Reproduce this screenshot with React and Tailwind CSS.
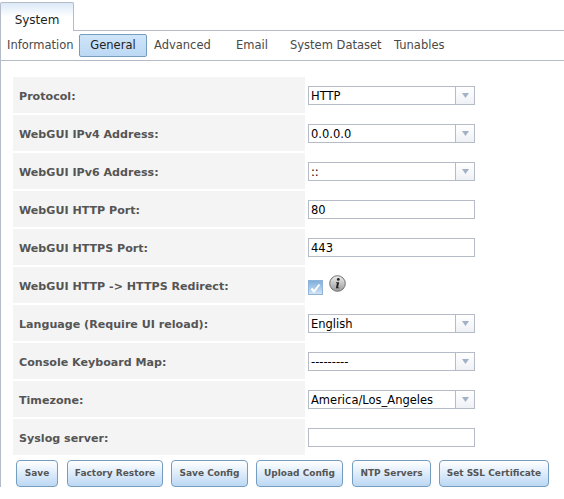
import React from 'react';

const font = "font-['DejaVu_Sans',sans-serif]";

const rows = [
  { label: 'Protocol:', type: 'select', value: 'HTTP' },
  { label: 'WebGUI IPv4 Address:', type: 'select', value: '0.0.0.0' },
  { label: 'WebGUI IPv6 Address:', type: 'select', value: '::' },
  { label: 'WebGUI HTTP Port:', type: 'text', value: '80' },
  { label: 'WebGUI HTTPS Port:', type: 'text', value: '443' },
  { label: 'WebGUI HTTP -> HTTPS Redirect:', type: 'check' },
  { label: 'Language (Require UI reload):', type: 'select', value: 'English' },
  { label: 'Console Keyboard Map:', type: 'select', value: '---------' },
  { label: 'Timezone:', type: 'select', value: 'America/Los_Angeles' },
  { label: 'Syslog server:', type: 'text', value: '' },
];

const subTabs = [
  { label: 'Information', w: 'w-[72px]' },
  { label: 'General', w: 'w-[68px]', active: true },
  { label: 'Advanced', w: 'w-[89px] pl-[7px]' },
  { label: 'Email', w: 'w-[54px]' },
  { label: 'System Dataset', w: 'w-[104px]' },
  { label: 'Tunables', w: 'w-[60px]' },
];

const buttons = [
  { label: 'Save', w: 'w-[42px]' },
  { label: 'Factory Restore', w: 'w-[96px] ml-[9px]' },
  { label: 'Save Config', w: 'w-[77px] ml-[8px]' },
  { label: 'Upload Config', w: 'w-[87px] ml-[8px]' },
  { label: 'NTP Servers', w: 'w-[79px] ml-[9px]' },
  { label: 'Set SSL Certificate', w: 'w-[110px] ml-[8px]' },
];

const Select = ({ value }) => (
  <div className="flex h-[19px] w-[167px] border border-[#b5bcc7] bg-white">
    <span className="flex-1 pl-[2px] text-[11.5px] leading-[19px] text-black">{value}</span>
    <span className="flex w-[19px] items-center justify-center border-l border-[#b5bcc7] bg-gradient-to-b from-white to-[#eef1f5]">
      <svg width="7" height="5" viewBox="0 0 7 5">
        <path d="M0 0h7L3.5 5z" fill="#a3b1c6" />
      </svg>
    </span>
  </div>
);

const TextInput = ({ value }) => (
  <div className="h-[19px] w-[167px] border border-[#b5bcc7] bg-white pl-[2px] text-[11.5px] leading-[19px] text-black">
    {value}
  </div>
);

const Check = () => (
  <div className="flex h-[36px] items-start gap-[6px]">
    <span className="mt-[13px] flex h-[15px] w-[15px] items-center justify-center border border-[#8fb4d8] bg-gradient-to-b from-[#7fb0dc] to-[#cfe3f5]">
      <svg width="11" height="10" viewBox="0 0 11 10">
        <path d="M1.5 5.5 4 8.5 9.5 1.5" fill="none" stroke="#fff" strokeWidth="2" />
      </svg>
    </span>
    <svg className="mt-[8px]" width="17" height="17" viewBox="0 0 17 17">
      <defs>
        <linearGradient id="info" x1="0" y1="0" x2="0" y2="1">
          <stop offset="0" stopColor="#eeeeee" />
          <stop offset="1" stopColor="#9a9a9a" />
        </linearGradient>
      </defs>
      <circle cx="8.5" cy="8.5" r="7.8" fill="url(#info)" stroke="#6f6f6f" />
      <circle cx="9.3" cy="4.4" r="1.4" fill="#222" />
      <path d="M7 7.2h3.2L9 12.4h1.2v.9H6.9l1-5.2H7z" fill="#222" />
    </svg>
  </div>
);

export default function App() {
  return (
    <div className={`${font} h-[499px] w-[564px] overflow-hidden bg-white`}>
      <div className="h-[2px]" />
      {/* Top tab */}
      <div className="flex h-[29px] border-b border-[#b5bcc7]">
        <div className="h-[29px] w-[74px] rounded-t-[2px] border border-b-0 border-[#b5bcc7] bg-gradient-to-b from-[#dbe9f7] via-white to-white pt-[10px] text-center text-[12px] leading-[14px] text-[#222]">
          System
        </div>
      </div>

      <div className="border-l border-[#b5bcc7]">
        {/* Sub tabs */}
        <div className="flex h-[30px] items-center border-b border-[#b5bcc7] pl-[6px]">
          {subTabs.map((tab) => (
            <div
              key={tab.label}
              className={`${tab.w} shrink-0 whitespace-nowrap text-[11.5px] ${
                tab.active
                  ? 'flex h-[23px] items-center justify-center rounded-[2px] border border-[#759dc0] bg-gradient-to-b from-[#cfe5fa] to-[#bcd8f4] text-[#222]'
                  : 'text-[#494949]'
              }`}
            >
              {tab.label}
            </div>
          ))}
        </div>

        {/* Form */}
        <div className="flex flex-col gap-[2px] pl-[12px] pt-[16px]">
          {rows.map((row) => (
            <div key={row.label} className="flex h-[36px]">
              <div className="flex w-[292px] items-center bg-[#f4f4f4] pl-[6px] pt-[4px] text-[11.1px] font-bold text-[#555]">
                {row.label}
              </div>
              <div className="flex items-center pl-[3px]">
                {row.type === 'select' && <Select value={row.value} />}
                {row.type === 'text' && <TextInput value={row.value} />}
                {row.type === 'check' && <Check />}
              </div>
            </div>
          ))}
        </div>

        {/* Buttons */}
        <div className="flex pl-[15px] pt-[5px]">
          {buttons.map((btn) => (
            <div
              key={btn.label}
              className={`${btn.w} flex h-[27px] shrink-0 items-center justify-center whitespace-nowrap rounded-[4px] border border-[#759dc0] bg-gradient-to-b from-white to-[#bcd8f4] text-[9px] font-bold text-[#555]`}
            >
              {btn.label}
            </div>
          ))}
        </div>
      </div>
    </div>
  );
}
